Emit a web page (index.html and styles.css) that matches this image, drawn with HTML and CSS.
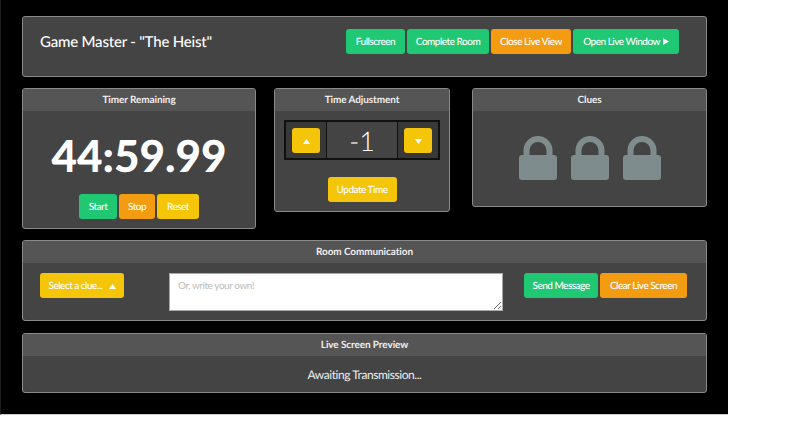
FILE: index.html
```html
<!DOCTYPE html>
<html lang="en">
<head>
    <meta charset="UTF-8">
    <meta name="viewport" content="width=device-width, initial-scale=1.0">
    <title>Game Master</title>
    <link rel="stylesheet" href="styles.css">
</head>
<body>
    <div class="page">
        <div class="panel title-bar">
            <h1 class="title">Game Master - "The Heist"</h1>
            <div class="title-actions">
                <button class="btn green fullscreen">Fullscreen</button>
                <button class="btn green complete">Complete Room</button>
                <button class="btn orange close-live">Close Live View</button>
                <button class="btn green open-live">Open Live Window
                    <svg class="arrow-right" width="6" height="7" viewBox="0 0 6 7"><path d="M0 0 L6 3.5 L0 7 Z" fill="#fff"/></svg>
                </button>
            </div>
        </div>

        <div class="middle-row">
            <div class="panel timer-panel">
                <div class="panel-heading">Timer Remaining</div>
                <div class="timer-value">44:59.99</div>
                <div class="timer-actions">
                    <button class="btn green start">Start</button>
                    <button class="btn orange stop">Stop</button>
                    <button class="btn yellow reset">Reset</button>
                </div>
            </div>

            <div class="panel adjust-panel">
                <div class="panel-heading">Time Adjustment</div>
                <div class="stepper">
                    <div class="stepper-cell side">
                        <button class="btn yellow step">
                            <svg width="7" height="5" viewBox="0 0 7 5"><path d="M3.5 0 L7 5 L0 5 Z" fill="#fff"/></svg>
                        </button>
                    </div>
                    <div class="stepper-cell amount">-1</div>
                    <div class="stepper-cell side">
                        <button class="btn yellow step">
                            <svg width="7" height="5" viewBox="0 0 7 5"><path d="M0 0 L7 0 L3.5 5 Z" fill="#fff"/></svg>
                        </button>
                    </div>
                </div>
                <div class="update-row">
                    <button class="btn yellow update">Update Time</button>
                </div>
            </div>

            <div class="panel clues-panel">
                <div class="panel-heading">Clues</div>
                <div class="locks">
                    <svg class="lock" width="38" height="44" viewBox="0 0 38 44"><path d="M7.5 20 V14.5 A11.5 11.5 0 0 1 30.5 14.5 V20" fill="none" stroke="#7f8c8d" stroke-width="6"/><rect y="19" width="38" height="25" rx="3" fill="#7f8c8d"/></svg>
                    <svg class="lock" width="38" height="44" viewBox="0 0 38 44"><path d="M7.5 20 V14.5 A11.5 11.5 0 0 1 30.5 14.5 V20" fill="none" stroke="#7f8c8d" stroke-width="6"/><rect y="19" width="38" height="25" rx="3" fill="#7f8c8d"/></svg>
                    <svg class="lock" width="38" height="44" viewBox="0 0 38 44"><path d="M7.5 20 V14.5 A11.5 11.5 0 0 1 30.5 14.5 V20" fill="none" stroke="#7f8c8d" stroke-width="6"/><rect y="19" width="38" height="25" rx="3" fill="#7f8c8d"/></svg>
                </div>
            </div>
        </div>

        <div class="panel comm-panel">
            <div class="panel-heading">Room Communication</div>
            <div class="comm-body">
                <button class="btn yellow select-clue">Select a clue...
                    <svg class="caret" width="7" height="5" viewBox="0 0 7 5"><path d="M3.5 0 L7 5 L0 5 Z" fill="#fff"/></svg>
                </button>
                <textarea class="message" placeholder="Or, write your own!"></textarea>
                <div class="comm-actions">
                    <button class="btn green send">Send Message</button>
                    <button class="btn orange clear">Clear Live Screen</button>
                </div>
            </div>
        </div>

        <div class="panel preview-panel">
            <div class="panel-heading">Live Screen Preview</div>
            <div class="preview-body">Awaiting Transmission...</div>
        </div>
    </div>
</body>
</html>
```

FILE: styles.css
```css
* {
    box-sizing: border-box;
}
html, body {
    margin: 0;
    background: #fff;
}
body {
    font-family: Lato, "Open Sans", sans-serif;
    color: #fff;
    text-rendering: geometricPrecision;
}
.page {
    width: 728px;
    height: 415px;
    padding: 16px 21px 0 21px;
    background: #000;
    border-left: 1px solid #1c1c1c;
    border-bottom: 1px solid #ccc;
}
.panel {
    background: #444;
    border: 1px solid #8a8a8a;
    border-radius: 3px;
    overflow: hidden;
}
.panel-heading {
    height: 22px;
    background: #555;
    font-size: 10px;
    font-weight: 700;
    letter-spacing: -0.1px;
    line-height: 22px;
    text-align: center;
    color: #eee;
}
.btn {
    height: 25px;
    padding: 1px 0 0;
    border: none;
    border-radius: 3px;
    font-family: inherit;
    font-size: 10px;
    font-weight: 500;
    letter-spacing: -0.5px;
    color: #fff;
    text-align: center;
    text-rendering: geometricPrecision;
}
.green { background: #20c873; }
.orange { background: #f39c12; }
.yellow { background: #f5c50a; }

.title-bar {
    display: flex;
    justify-content: space-between;
    height: 61px;
    padding: 12px 27px 0 17px;
}
.title {
    margin: 0;
    height: 25px;
    font-size: 15px;
    font-weight: 500;
    letter-spacing: -0.2px;
    line-height: 27px;
}
.title-actions {
    display: flex;
    gap: 2px;
}
.fullscreen { width: 59px; }
.complete { width: 82px; }
.close-live { width: 80px; }
.open-live { width: 106px; }
.arrow-right {
    margin-left: 1px;
}

.middle-row {
    display: flex;
    align-items: flex-start;
    margin-top: 11px;
}
.timer-panel {
    width: 234px;
    height: 141px;
}
.timer-value {
    margin-top: 15px;
    font-size: 44px;
    font-weight: 900;
    line-height: 60px;
    text-align: center;
}
.timer-actions {
    display: flex;
    justify-content: center;
    gap: 2px;
    margin-top: 8px;
}
.start { width: 38px; }
.stop { width: 36px; }
.reset { width: 42px; }

.adjust-panel {
    width: 176px;
    height: 124px;
    margin-left: 18px;
}
.stepper {
    display: flex;
    width: 156px;
    height: 40px;
    margin: 9px 0 0 9px;
    border: 2px solid #111;
}
.stepper-cell {
    display: flex;
    align-items: center;
    justify-content: center;
}
.side {
    width: 40px;
    background: #383838;
}
.amount {
    flex: 1;
    border-left: 1px solid #111;
    border-right: 1px solid #111;
    font-size: 27px;
    font-weight: 300;
    color: #fff;
}
.step {
    width: 28px;
}
.update-row {
    display: flex;
    justify-content: center;
    margin-top: 17px;
}
.update { width: 69px; }

.clues-panel {
    width: 235px;
    height: 119px;
    margin-left: 22px;
}
.locks {
    display: flex;
    justify-content: center;
    gap: 14px;
    margin-top: 25px;
}

.comm-panel {
    width: 685px;
    height: 81px;
    margin-top: 11px;
}
.comm-body {
    display: flex;
    align-items: flex-start;
    padding: 10px 0 0 17px;
}
.select-clue { width: 84px; }
.caret { margin-left: 4px; }
.message {
    width: 334px;
    height: 38px;
    margin-left: 45px;
    padding: 5px 8px;
    background: #fff;
    border: 1px solid #aaa;
    font-family: inherit;
    font-size: 10px;
    letter-spacing: -0.45px;
}
.message::placeholder {
    color: #bbb;
}
.comm-actions {
    display: flex;
    gap: 2px;
    margin-left: 21px;
}
.send { width: 74px; }
.clear { width: 87px; }

.preview-panel {
    width: 685px;
    height: 60px;
    margin-top: 12px;
}
.preview-body {
    font-size: 12px;
    letter-spacing: -0.45px;
    line-height: 37px;
    text-align: center;
    color: #eee;
}
```
